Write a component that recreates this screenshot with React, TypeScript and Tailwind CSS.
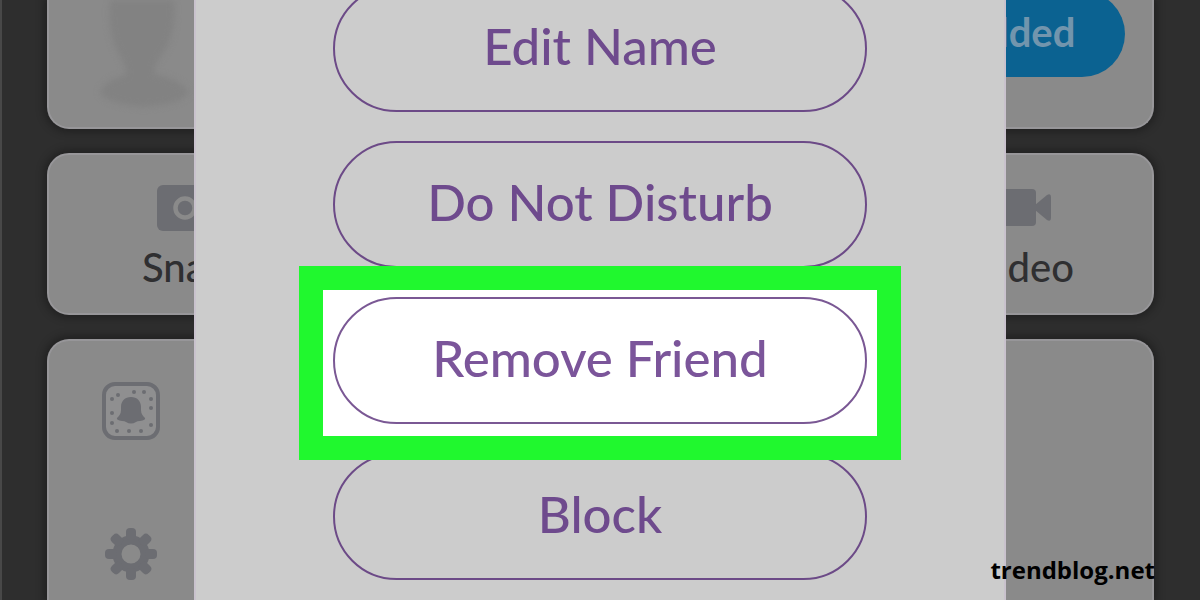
import type { ReactNode } from 'react';
import { clsx } from 'clsx';

type MenuButtonProps = {
  label: string;
  highlighted?: boolean;
};

const CARD = 'bg-[#8a8a8a] border-[#979699] shadow-[0_0_8px_3px_rgba(0,0,0,0.3)]';

function Silhouette() {
  return (
    <svg viewBox="0 0 100 112" className="w-[100px] h-[112px] self-start blur-[3px]" fill="#828282" aria-hidden="true">
      <path d="M17 0H81Q83 34 71 52Q61 64 61 74Q84 78 96 92Q90 104 50 107Q14 104 7 92Q14 79 33 75Q33 64 26 54Q14 34 17 0Z" />
    </svg>
  );
}

function SnapIcon() {
  return (
    <svg viewBox="0 0 56 48" className="w-14 h-12" aria-hidden="true">
      <rect x="0" y="1" width="56" height="46" rx="6" fill="#6c6d72" />
      <circle cx="28" cy="24" r="9.5" fill="none" stroke="#8a8a8a" strokeWidth="4.5" />
    </svg>
  );
}

function VideoIcon() {
  return (
    <svg viewBox="0 0 60 48" className="w-[60px] h-12" fill="#6c6d72" aria-hidden="true">
      <rect x="0" y="5" width="44" height="37" rx="4" />
      <path d="M43 21L55 11Q59 9 59 13V34Q59 38 55 36L43 26Z" />
    </svg>
  );
}

function SnapcodeIcon() {
  const dots = [
    [10, 17], [16, 13], [32, 10], [42, 10], [49, 17], [49, 26], [10, 31],
    [10, 41], [15, 49], [27, 49], [39, 49], [49, 43],
  ];
  return (
    <svg viewBox="0 0 58 58" className="w-[58px] h-[58px]" fill="#6c6d72" aria-hidden="true">
      <rect x="2" y="2" width="54" height="54" rx="11" fill="#8f8f90" stroke="#6c6d72" strokeWidth="4" />
      {dots.map(([x, y]) => (
        <circle key={`${x}-${y}`} cx={x} cy={y} r="2" />
      ))}
      <path d="M29 15C35 15 39 19 39 25V28C39 32 41 34 43 36Q44 38 38 39Q35 39 34 40Q29 43 24 40Q23 39 20 39Q14 38 15 36C17 34 19 32 19 28V25C19 19 23 15 29 15Z" />
    </svg>
  );
}

function GearIcon() {
  return (
    <svg viewBox="-26 -26 52 52" className="w-[52px] h-[52px]" aria-hidden="true">
      <circle r="14" fill="none" stroke="#6c6d72" strokeWidth="9" />
      {[0, 45, 90, 135, 180, 225, 270, 315].map((angle) => (
        <rect key={angle} x="-5" y="-26" width="10" height="12" rx="4" fill="#6c6d72" transform={`rotate(${angle})`} />
      ))}
    </svg>
  );
}

function Action({ icon, label }: { icon: ReactNode; label: string }) {
  return (
    <button type="button" className="flex flex-col items-center gap-[10px] text-[40px] leading-[50px] font-medium text-[#2f2f31]">
      {icon}
      {label}
    </button>
  );
}

function MenuButton({ label, highlighted }: MenuButtonProps) {
  return (
    <div className={clsx('relative shrink-0', highlighted && 'z-10')}>
      {highlighted && (
        <div className="absolute -inset-x-[34px] -top-[31px] -bottom-9 border-[24px] border-[#20f82e] bg-white" />
      )}
      <button
        type="button"
        className={clsx(
          'relative w-full h-[127px] pb-1 rounded-full border-2 text-[51px] font-medium',
          highlighted ? 'border-[#7a5894] text-[#7b559a]' : 'border-[#6c4a87] text-[#6e4a8d]',
        )}
      >
        {label}
      </button>
    </div>
  );
}

export default function App() {
  return (
    <div className="relative h-screen overflow-hidden bg-[#2e2e2e] font-['Lato',sans-serif] shadow-[inset_2px_0_0_#484848]">
      <main className="flex h-full flex-col gap-6 pl-[47px] pr-[46px]">
        <section className={clsx(CARD, 'flex h-[129px] shrink-0 items-end justify-between rounded-b-[22px] border-2 border-t-0 pb-[50px] pl-11 pr-[27px]')}>
          <Silhouette />
          <button type="button" className="h-[86px] w-[216px] shrink-0 rounded-full bg-[#0b6291] pb-1 text-[40px] font-bold text-[#7295ad]">
            Added
          </button>
        </section>

        <section className={clsx(CARD, 'flex h-[162px] shrink-0 items-center justify-between rounded-[22px] border-2 pl-[93px] pr-[78px] pt-2')}>
          <Action icon={<SnapIcon />} label="Snap" />
          <Action icon={<VideoIcon />} label="Video" />
        </section>

        <section className={clsx(CARD, 'flex flex-1 flex-col gap-[88px] rounded-t-[22px] border-2 border-b-0 pl-[53px] pt-[41px]')}>
          <SnapcodeIcon />
          <div className="pl-[3px]">
            <GearIcon />
          </div>
        </section>
      </main>

      <div className="absolute inset-0 flex justify-center">
        <div
          role="dialog"
          aria-label="Friend options"
          className="flex h-full w-[812px] flex-col justify-end gap-[29px] overflow-hidden border-x-2 border-[#c9c2cd] bg-[#cccccc] px-[137px] pb-5"
        >
          <MenuButton label="Edit Name" />
          <MenuButton label="Do Not Disturb" />
          <MenuButton label="Remove Friend" highlighted />
          <MenuButton label="Block" />
        </div>
      </div>

      <p className="absolute bottom-[14px] right-[45px] font-['Open_Sans',sans-serif] text-2xl font-bold text-black">
        trendblog.net
      </p>
    </div>
  );
}
